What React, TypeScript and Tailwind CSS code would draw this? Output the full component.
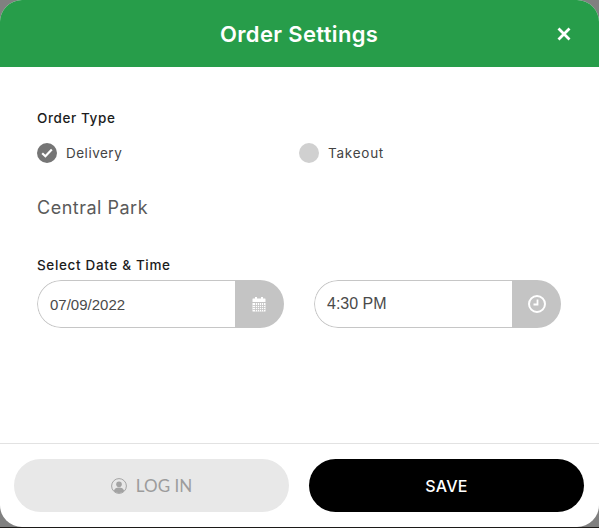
const montserrat = "font-['Inter','Noto_Sans',sans-serif]";

function CalendarIcon() {
  return (
    <svg width="14" height="15" viewBox="0 0 14 15" fill="#fff" className="mr-[2px]">
      <rect x="3" y="0" width="2" height="2.5" />
      <rect x="9" y="0" width="2" height="2.5" />
      <path d="M1 1.5h12a.5.5 0 0 1 .5.5v3H.5V2a.5.5 0 0 1 .5-.5z" />
      <path d="M.5 6h13v8a.5.5 0 0 1-.5.5H1a.5.5 0 0 1-.5-.5z" />
      <path
        d="M3.5 6v8.5M5.5 6v8.5M7.5 6v8.5M9.5 6v8.5M11.5 6v8.5M.5 8.5h13M.5 10.5h13M.5 12.5h13"
        stroke="#c4c4c4"
        strokeWidth=".8"
      />
    </svg>
  );
}

function ClockIcon() {
  return (
    <svg width="18" height="18" viewBox="0 0 18 18" fill="none" stroke="#fff">
      <circle cx="9" cy="9" r="8" strokeWidth="2" />
      <path d="M9.5 4.5v5H5.5" strokeWidth="1.8" />
    </svg>
  );
}

function UserIcon() {
  return (
    <svg width="16" height="16" viewBox="0 0 16 16">
      <circle cx="8" cy="8" r="7.4" fill="none" stroke="#a3a3a3" strokeWidth="1" />
      <circle cx="8" cy="6.2" r="2.8" fill="#a3a3a3" />
      <path d="M2.8 13c.6-2.6 2.6-3.6 5.2-3.6s4.6 1 5.2 3.6A7 7 0 0 1 8 15a7 7 0 0 1-5.2-2z" fill="#a3a3a3" />
    </svg>
  );
}

function PickerField({ value, icon, textClass }: { value: string; icon: React.ReactNode; textClass: string }) {
  return (
    <div className="flex h-12 w-[247px] overflow-hidden rounded-full bg-white">
      <div
        className={`flex flex-1 items-center rounded-l-full border border-r-0 border-[#c6c6c6] pl-[12px] font-['Liberation_Sans',sans-serif] text-[#4a4a4a] ${textClass}`}
      >
        {value}
      </div>
      <div className="flex w-[49px] items-center justify-center bg-[#c4c4c4]">{icon}</div>
    </div>
  );
}

export default function App() {
  return (
    <div className="h-[528px] w-[599px] overflow-hidden border-b border-[#1c1a18] bg-[#808080]">
      <div className={`flex h-[527px] flex-col overflow-hidden rounded-[22px] bg-white ${montserrat}`}>
        <div className="flex h-[67px] items-center justify-between bg-[#279d4a] pr-[28px] pl-[220px]">
          <h1 className="text-[22px] leading-none font-semibold tracking-[0.35px] text-white">Order Settings</h1>
          <svg width="14" height="14" viewBox="0 0 14 14" stroke="#fff" strokeWidth="2.8">
            <path d="M1.5 1.5l11 11M12.5 1.5l-11 11" />
          </svg>
        </div>

        <div className="flex flex-1 flex-col px-[37px] pt-[43px]">
          <div className="text-[13.5px] leading-4 font-medium tracking-[0.6px] text-[#1c1c1c]">Order Type</div>
          <div className="mt-[17px] flex">
            <div className="flex w-[262px] items-center gap-[9px]">
              <div className="flex h-5 w-5 items-center justify-center rounded-full bg-[#757575]">
                <svg width="12" height="10" viewBox="0 0 12 10" fill="none" stroke="#fff" strokeWidth="2.2">
                  <path d="M1.2 5.2l3.2 3 6.4-6.6" />
                </svg>
              </div>
              <span className="text-[13.5px] tracking-[0.5px] text-[#444]">Delivery</span>
            </div>
            <div className="flex items-center gap-[9px]">
              <div className="h-5 w-5 rounded-full bg-[#d0d0d0]" />
              <span className="text-[13.5px] tracking-[0.75px] text-[#444]">Takeout</span>
            </div>
          </div>
          <div className="mt-[33px] text-[18px] leading-6 tracking-[0.5px] text-[#5a5a5a]">Central Park</div>
          <div className="mt-[37px] text-[13.5px] leading-4 font-medium tracking-[0.65px] text-[#1c1c1c]">
            Select Date &amp; Time
          </div>
          <div className="mt-[7px] flex gap-[30px]">
            <PickerField value="07/09/2022" icon={<CalendarIcon />} textClass="pt-[1px] text-[15px]" />
            <PickerField value="4:30 PM" icon={<ClockIcon />} textClass="pb-[1px] text-[16px]" />
          </div>
        </div>

        <div className="flex h-[84px] justify-between border-t border-[#e2e2e2] pt-[15px] pr-[15px] pl-[14px]">
          <button className="flex h-[53px] w-[275px] items-center justify-center gap-[9px] rounded-full bg-[#e8e8e8] font-['Lato',sans-serif] text-[17px] text-[#9c9c9c]">
            <UserIcon />
            LOG IN
          </button>
          <button className="h-[53px] w-[275px] rounded-full bg-black text-[16px] font-medium tracking-[0.3px] text-white">
            SAVE
          </button>
        </div>
      </div>
    </div>
  );
}
